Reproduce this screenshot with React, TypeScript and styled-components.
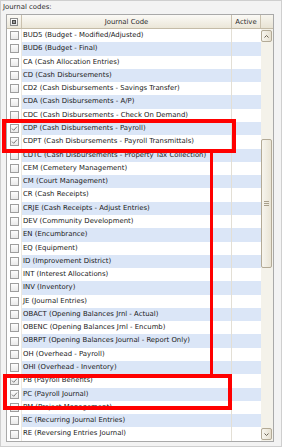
import React from 'react'
import styled, { createGlobalStyle } from 'styled-components'

const ROW_H = 13.29

const codes = [
  'BUD5 (Budget - Modified/Adjusted)',
  'BUD6 (Budget - Final)',
  'CA (Cash Allocation Entries)',
  'CD (Cash Disbursements)',
  'CD2 (Cash Disbursements - Savings Transfer)',
  'CDA (Cash Disbursements - A/P)',
  'CDC (Cash Disbursements - Check On Demand)',
  'CDP (Cash Disbursements - Payroll)',
  'CDPT (Cash Disbursements - Payroll Transmittals)',
  'CDTC (Cash Disbursements - Property Tax Collection)',
  'CEM (Cemetery Management)',
  'CM (Court Management)',
  'CR (Cash Receipts)',
  'CRJE (Cash Receipts - Adjust Entries)',
  'DEV (Community Development)',
  'EN (Encumbrance)',
  'EQ (Equipment)',
  'ID (Improvement District)',
  'INT (Interest Allocations)',
  'INV (Inventory)',
  'JE (Journal Entries)',
  'OBACT (Opening Balances Jrnl - Actual)',
  'OBENC (Opening Balances Jrnl - Encumb)',
  'OBRPT (Opening Balances Journal - Report Only)',
  'OH (Overhead - Payroll)',
  'OHI (Overhead - Inventory)',
  'PB (Payroll Benefits)',
  'PC (Payroll Journal)',
  'PM (Project Management)',
  'RC (Recurring Journal Entries)',
  'RE (Reversing Entries Journal)',
]

const checkedCodes = ['CDP', 'CDPT', 'PB', 'PC']

const GlobalStyle = createGlobalStyle`
  html, body {
    margin: 0;
    padding: 0;
    background: #f3f3f3;
  }
  * {
    box-sizing: border-box;
  }
`

const App: React.FC = () => {
  return (
    <Page>
      <GlobalStyle />
      <Label>Journal codes:</Label>
      <Frame>
        <HeaderRow>
          <HeaderCell>
            <HeaderBox><span /></HeaderBox>
          </HeaderCell>
          <HeaderCell>Journal Code</HeaderCell>
          <HeaderCell>Active</HeaderCell>
          <HeaderCorner />
        </HeaderRow>
        <Body>
          <List>
            {codes.map((c, i) => {
              const key = c.split(' ')[0]
              const on = checkedCodes.includes(key)
              return (
                <Row key={c} $alt={i % 2 === 1}>
                  <CheckCell>
                    <CheckBox>
                      {on && (
                        <svg width="9" height="9" viewBox="0 0 9 9">
                          <path d="M2 4.6 L3.7 6.3 L7 2.6" fill="none" stroke="#7a7a7a" strokeWidth="1" />
                        </svg>
                      )}
                    </CheckBox>
                  </CheckCell>
                  <CodeCell>{c}</CodeCell>
                  <ActiveCell />
                </Row>
              )
            })}
          </List>
          <ScrollBar>
            <ScrollButton>
              <svg width="5" height="3" viewBox="0 0 5 3">
                <path d="M0.5 2.5 L2.5 0.5 L4.5 2.5" fill="none" stroke="#6b6355" strokeWidth="1" />
              </svg>
            </ScrollButton>
            <Thumb $offset={97}>
              <Grip />
            </Thumb>
            <Spacer />
            <ScrollButton $bottom>
              <svg width="5" height="3" viewBox="0 0 5 3">
                <path d="M0.5 0.5 L2.5 2.5 L4.5 0.5" fill="none" stroke="#6b6355" strokeWidth="1" />
              </svg>
            </ScrollButton>
          </ScrollBar>
        </Body>
      </Frame>
      <Marker $left={1} $top={118} $w={234} $h={34} />
      <Connector />
      <Marker $left={2} $top={373} $w={229} $h={36} />
    </Page>
  )
}

const Page = styled.div`
  position: relative;
  width: 282px;
  height: 447px;
  border: 1px solid #cfcfcf;
  background: #f3f3f3;
  padding: 0 0 0 2px;
  font-family: "DejaVu Sans", Verdana, sans-serif;
  font-size: 6.9px;
  color: #202020;
`

const Label = styled.div`
  height: 13px;
  line-height: 13px;
  color: #2a2a2a;
`

const Frame = styled.div`
  width: 268px;
  height: 428px;
  margin-left: 3px;
  border: 1px solid #a9a9a9;
  background: #fff;
  display: flex;
  flex-direction: column;
`

const HeaderRow = styled.div`
  display: grid;
  grid-template-columns: 15px 210px 29px 12px;
  height: 14px;
  border-bottom: 1px solid #c4bba7;
  background: linear-gradient(#fbfaf6, #ebe6d8);
`

const HeaderCell = styled.div`
  display: flex;
  align-items: center;
  justify-content: center;
  border-right: 1px solid #cac1ae;
  color: #2a2a2a;
  white-space: nowrap;
`

const HeaderCorner = styled.div`
  background: linear-gradient(#f7f5ee, #e8e3d4);
`

const HeaderBox = styled.div`
  width: 8px;
  height: 8px;
  border: 1px solid #8d8d8d;
  background: linear-gradient(#ffffff, #e6e6e6);
  display: flex;
  align-items: center;
  justify-content: center;
  span {
    width: 4px;
    height: 4px;
    border: 1px solid #4a4a4a;
    background: #9a9a9a;
  }
`

const Body = styled.div`
  display: flex;
  flex: 1;
  overflow: hidden;
`

const List = styled.div`
  width: 254px;
  display: flex;
  flex-direction: column;
`

const Row = styled.div<{ $alt: boolean }>`
  display: grid;
  grid-template-columns: 15px 210px 29px;
  height: ${ROW_H}px;
  flex: 0 0 ${ROW_H}px;
  background: ${p => (p.$alt ? '#dbe6f7' : '#ffffff')};
`

const CheckCell = styled.div`
  background: #fff;
  border-right: 1px solid #ece8df;
  display: flex;
  align-items: center;
  justify-content: center;
`

const CheckBox = styled.div`
  width: 9px;
  height: 9px;
  border: 1px solid #9e9e9e;
  background: linear-gradient(#fdfdfd, #e9e9e9);
  display: flex;
  align-items: center;
  justify-content: center;
  svg {
    flex: none;
  }
`

const CodeCell = styled.div`
  padding-left: 1px;
  line-height: ${ROW_H}px;
  white-space: nowrap;
  overflow: hidden;
  border-right: 1px solid #e3dfd5;
`

const ActiveCell = styled.div``

const ScrollBar = styled.div`
  width: 12px;
  background: #f4f2ea;
  display: flex;
  flex-direction: column;
  align-items: flex-start;
`

const ScrollButton = styled.div<{ $bottom?: boolean }>`
  width: 11px;
  height: 12px;
  margin: ${p => (p.$bottom ? '0 0 1px 0' : '1px 0 0 0')};
  border: 1px solid #b3aa96;
  border-radius: 2px;
  background: linear-gradient(90deg, #f8f6ef, #e6e0d0);
  display: flex;
  align-items: center;
  justify-content: center;
`

const Thumb = styled.div<{ $offset: number }>`
  width: 11px;
  height: 129px;
  margin-top: ${p => p.$offset}px;
  border: 1px solid #b3aa96;
  border-radius: 2px;
  background: linear-gradient(90deg, #f7f5ee, #e9e4d5);
  display: flex;
  align-items: center;
  justify-content: center;
`

const Grip = styled.div`
  width: 5px;
  height: 5px;
  border-top: 1px solid #a89f8b;
  border-bottom: 1px solid #a89f8b;
  position: relative;
  &::after {
    content: '';
    position: absolute;
    left: 0;
    right: 0;
    top: 1px;
    border-top: 1px solid #a89f8b;
  }
`

const Spacer = styled.div`
  flex: 1;
`

const Marker = styled.div<{ $left: number; $top: number; $w: number; $h: number }>`
  position: absolute;
  left: ${p => p.$left}px;
  top: ${p => p.$top}px;
  width: ${p => p.$w}px;
  height: ${p => p.$h}px;
  border: 4px solid #f00;
  pointer-events: none;
`

const Connector = styled.div`
  position: absolute;
  left: 209px;
  top: 152px;
  width: 3px;
  height: 222px;
  background: #f00;
  pointer-events: none;
`

export default App
